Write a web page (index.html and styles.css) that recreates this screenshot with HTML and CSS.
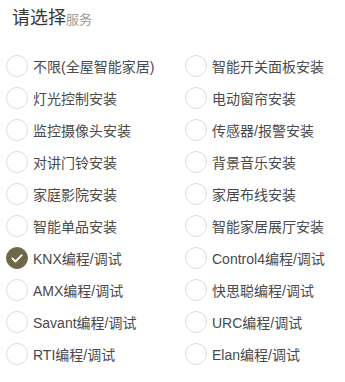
FILE: index.html
```html
<!DOCTYPE html>
<html lang="zh-CN">
<head>
  <meta charset="UTF-8">
  <title>请选择服务</title>
  <link rel="stylesheet" href="styles.css">
</head>
<body>

  <div class="title">请选择<span class="sub">服务</span></div>

  <div class="options" id="options"></div>

  <script>
    var services = [
      "不限(全屋智能家居)", "智能开关面板安装",
      "灯光控制安装", "电动窗帘安装",
      "监控摄像头安装", "传感器/报警安装",
      "对讲门铃安装", "背景音乐安装",
      "家庭影院安装", "家居布线安装",
      "智能单品安装", "智能家居展厅安装",
      "KNX编程/调试", "Control4编程/调试",
      "AMX编程/调试", "快思聪编程/调试",
      "Savant编程/调试", "URC编程/调试",
      "RTI编程/调试", "Elan编程/调试"
    ];
    var checked = ["KNX编程/调试"];

    var box = document.getElementById('options');
    services.forEach(function (name) {
      var item = document.createElement('label');
      item.className = 'option';
      if (checked.indexOf(name) > -1) item.classList.add('checked');

      var radio = document.createElement('span');
      radio.className = 'radio';
      radio.innerHTML = '<svg viewBox="0 0 22 22" width="22" height="22"><path d="M6.3 11.4l3.2 3.1 6.2-6.4" fill="none" stroke="#fff" stroke-width="1.8" stroke-linecap="round" stroke-linejoin="round"/></svg>';

      var text = document.createElement('span');
      text.className = 'name';
      text.textContent = name;

      item.appendChild(radio);
      item.appendChild(text);
      item.addEventListener('click', function () {
        item.classList.toggle('checked');
      });
      box.appendChild(item);
    });
  </script>

</body>
</html>
```

FILE: styles.css
```css
body {
  margin: 0;
  background: #fff;
  font-family: "Liberation Sans", "Noto Sans CJK SC", sans-serif;
  color: #4a4a4a;
}

.title {
  padding: 6px 0 0 12px;
  font-size: 18px;
  line-height: 24px;
  color: #383838;
}

.title .sub {
  font-size: 13px;
  color: #9a9a9a;
}

.options {
  display: grid;
  grid-template-columns: 179px 1fr;
  grid-auto-rows: 32px;
  padding: 18px 0 0 6px;
}

.option {
  display: flex;
  align-items: center;
  gap: 5px;
  cursor: pointer;
}

.radio {
  width: 22px;
  height: 22px;
  box-sizing: border-box;
  border: 1px solid #dcdcdc;
  border-radius: 50%;
  flex: none;
  position: relative;
}

.radio svg {
  display: none;
  position: absolute;
  left: -1px;
  top: -1px;
}

.option.checked .radio {
  background: #6d6948;
  border-color: #6d6948;
}

.option.checked .radio svg {
  display: block;
}

.name {
  font-size: 14px;
  white-space: nowrap;
}
```
